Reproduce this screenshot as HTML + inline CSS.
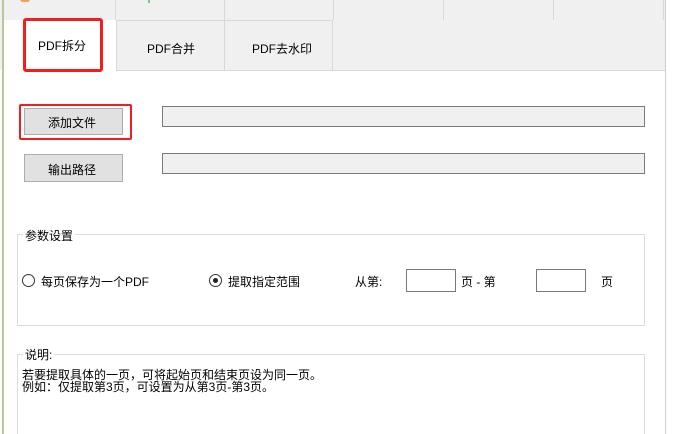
<!DOCTYPE html>
<html style="width:688px;height:434px;overflow:hidden"><head><meta charset="utf-8"><style>
*{margin:0;padding:0;box-sizing:border-box}
body{width:688px;height:434px;overflow:hidden;background:#fff;position:relative;font-family:"Liberation Sans","WenQuanYi Zen Hei","Noto Sans CJK SC",sans-serif;font-size:12px;color:#000}
.a{position:absolute}
.t{white-space:nowrap}
</style></head><body>
<div class="a" style="left:0;top:0;width:665px;height:70px;background:#f0f0f0"></div>
<div class="a" style="left:2px;top:0;width:2px;height:434px;background:#b8c89a"></div>
<div class="a" style="left:665px;top:0;width:1px;height:434px;background:#d0d0d0"></div>
<div class="a" style="left:115px;top:0;width:1px;height:20px;background:#d8d8d8"></div>
<div class="a" style="left:224px;top:0;width:1px;height:20px;background:#d8d8d8"></div>
<div class="a" style="left:333px;top:0;width:1px;height:20px;background:#d8d8d8"></div>
<div class="a" style="left:443px;top:0;width:1px;height:20px;background:#d8d8d8"></div>
<div class="a" style="left:553px;top:0;width:1px;height:20px;background:#d8d8d8"></div>
<div class="a" style="left:663px;top:0;width:1px;height:20px;background:#d8d8d8"></div>
<div class="a" style="left:20px;top:-4px;width:10px;height:6px;background:#f0a050;border-radius:3px"></div>
<div class="a" style="left:148px;top:0;width:2px;height:3px;background:#7c7"></div>
<div class="a" style="left:116px;top:20px;width:1px;height:50px;background:#d8d8d8"></div>
<div class="a" style="left:224px;top:20px;width:1px;height:50px;background:#d8d8d8"></div>
<div class="a" style="left:332px;top:20px;width:1px;height:50px;background:#d8d8d8"></div>
<div class="a" style="left:116px;top:20px;width:217px;height:1px;background:#d8d8d8"></div>
<div class="a" style="left:116px;top:70px;width:549px;height:1px;background:#d8d8d8"></div>
<div class="a" style="left:4px;top:20px;width:112px;height:51px;background:#fff"></div>
<div class="a" style="left:23px;top:18px;width:80px;height:54px;border:3px solid #f21d1d;border-radius:3px"></div>
<div class="a t" style="left:38px;top:37px">PDF拆分</div>
<div class="a t" style="left:147px;top:40px">PDF合并</div>
<div class="a t" style="left:252px;top:40px">PDF去水印</div>
<div class="a" style="left:24px;top:108px;width:99px;height:27px;background:#e1e1e1;border:1px solid #adadad"></div>
<div class="a t" style="left:48px;top:114px">添加文件</div>
<div class="a" style="left:19px;top:104px;width:113px;height:36px;border:2px solid #f21d1d;border-radius:2px"></div>
<div class="a" style="left:24px;top:154px;width:99px;height:28px;background:#e1e1e1;border:1px solid #adadad"></div>
<div class="a t" style="left:48px;top:161px">输出路径</div>
<div class="a" style="left:162px;top:106px;width:483px;height:21px;background:#f0f0f0;border:1px solid #7a7a7a"></div>
<div class="a" style="left:162px;top:153px;width:483px;height:21px;background:#f0f0f0;border:1px solid #7a7a7a"></div>
<div class="a" style="left:17px;top:234px;width:628px;height:92px;border:1px solid #dcdcdc"></div>
<div class="a t" style="left:23px;top:227px;background:#fff;padding:0 2px">参数设置</div>
<div class="a" style="left:22px;top:274px;width:13px;height:13px;border:1px solid #333;border-radius:50%"></div>
<div class="a t" style="left:41px;top:273px">每页保存为一个PDF</div>
<div class="a" style="left:209px;top:274px;width:13px;height:13px;border:1px solid #333;border-radius:50%"></div>
<div class="a" style="left:213px;top:278px;width:5px;height:5px;background:#222;border-radius:50%"></div>
<div class="a t" style="left:228px;top:273px">提取指定范围</div>
<div class="a t" style="left:355px;top:273px">从第:</div>
<div class="a" style="left:406px;top:269px;width:50px;height:23px;border:1px solid #7a7a7a"></div>
<div class="a t" style="left:461px;top:273px">页 - 第</div>
<div class="a" style="left:536px;top:269px;width:50px;height:23px;border:1px solid #7a7a7a"></div>
<div class="a t" style="left:601px;top:273px">页</div>
<div class="a" style="left:17px;top:354px;width:628px;height:90px;border:1px solid #dcdcdc"></div>
<div class="a t" style="left:23px;top:346px;background:#fff;padding:0 2px">说明:</div>
<div class="a t" style="left:22px;top:369px;line-height:12px">若要提取具体的一页，可将起始页和结束页设为同一页。<br>例如：仅提取第3页，可设置为从第3页-第3页。</div>
</body></html>
